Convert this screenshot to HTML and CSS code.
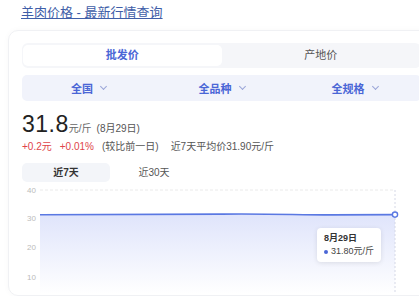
FILE: index.html
```html
<!DOCTYPE html>
<html lang="zh">
<head>
  <meta charset="UTF-8" />
  <title>羊肉价格 - 最新行情查询</title>
  <link rel="stylesheet" href="styles.css">
</head>
<body>

  <a class="page-title" href="#">羊肉价格 - 最新行情查询</a>

  <div class="card">

    <!-- onglets prix -->
    <div class="price-tabs">
      <div class="price-tab active">批发价</div>
      <div class="price-tab">产地价</div>
    </div>

    <!-- filtres -->
    <div class="filters">
      <div class="filter">全国 <span class="chev"></span></div>
      <div class="filter">全品种 <span class="chev"></span></div>
      <div class="filter">全规格 <span class="chev"></span></div>
    </div>

    <!-- prix -->
    <div class="price">
      <span class="price-value">31.8</span><span class="price-unit">元/斤</span>
      <span class="price-date">(8月29日)</span>
    </div>
    <div class="price-change">
      <span class="up">+0.2元</span>
      <span class="up">+0.01%</span>
      <span class="muted">(较比前一日)</span>
      <span class="muted avg">近7天平均价31.90元/斤</span>
    </div>

    <!-- periode -->
    <div class="periods">
      <div class="period active">近7天</div>
      <div class="period">近30天</div>
    </div>

    <!-- graphique -->
    <div class="chart">
      <svg width="396" height="110" viewBox="0 0 396 110">
        <defs>
          <linearGradient id="fill" x1="0" y1="0" x2="0" y2="1">
            <stop offset="0" stop-color="#dfe4fb" />
            <stop offset="1" stop-color="#ffffff" />
          </linearGradient>
        </defs>
        <g class="axis">
          <text x="14" y="9">40</text>
          <text x="14" y="37">30</text>
          <text x="14" y="66">20</text>
          <text x="14" y="96">10</text>
        </g>
        <g class="grid">
          <line x1="18" y1="6" x2="373" y2="6" />
          <line x1="18" y1="34.5" x2="373" y2="34.5" />
          <line x1="18" y1="63.5" x2="373" y2="63.5" />
          <line x1="18" y1="92.5" x2="373" y2="92.5" />
        </g>
        <path d="M18 30.8 C 80 30.6, 140 30.5, 200 30.1 S 270 30.9, 310 30.9 L 373 30.6 L 373 110 L 18 110 Z" fill="url(#fill)" />
        <line class="pointer" x1="373" y1="6" x2="373" y2="110" />
        <path class="series" d="M18 30.8 C 80 30.6, 140 30.5, 200 30.1 S 270 30.9, 310 30.9 L 373 30.6" />
        <circle class="dot" cx="373" cy="30.6" r="2.6" />
      </svg>

      <div class="tooltip">
        <div class="tip-date">8月29日</div>
        <div class="tip-value"><span class="tip-dot"></span>31.80元/斤</div>
      </div>
    </div>

  </div>

</body>
</html>
```

FILE: styles.css
```css
  * {
    margin: 0;
    padding: 0;
    box-sizing: border-box;
  }

  html {
    overflow: hidden;
  }

  body {
    font-family: "Liberation Sans", "Noto Sans CJK SC", sans-serif;
    background: #fff;
    color: #333;
    width: 419px;
    height: 296px;
    overflow: hidden;
  }

  /* TITRE */
  .page-title {
    display: block;
    margin: 4px 0 0 21px;
    font-size: 13px;
    line-height: 18px;
    color: #3f5ea8;
    text-decoration: underline;
  }

  /* CARTE */
  .card {
    width: 432px;
    margin: 8px 0 0 8px;
    padding: 12px 18px 0 13px;
    border: 1px solid #f0f1f4;
    border-radius: 10px;
    box-shadow: 0 0 6px rgba(0, 0, 0, 0.03);
    height: 266px;
    overflow: hidden;
  }

  /* ONGLETS PRIX */
  .price-tabs {
    display: flex;
    background: #f5f6f9;
    border-radius: 6px;
    padding: 2px 1px;
    height: 25px;
  }
  .price-tab {
    flex: 1;
    text-align: center;
    font-size: 11px;
    line-height: 21px;
    color: #555;
  }
  .price-tab.active {
    background: #fff;
    border-radius: 5px;
    color: #4a66d6;
    font-weight: bold;
  }

  /* FILTRES */
  .filters {
    display: flex;
    margin-top: 7px;
    height: 26px;
    background: #f1f3fb;
    border-radius: 5px;
  }
  .filter {
    flex: 1;
    display: flex;
    justify-content: center;
    align-items: center;
    gap: 8px;
    font-size: 11px;
    font-weight: bold;
    color: #4a66d6;
  }
  .chev {
    width: 5px;
    height: 5px;
    border-right: 1px solid #9aa6d8;
    border-bottom: 1px solid #9aa6d8;
    transform: rotate(45deg);
    margin-top: -3px;
  }

  /* PRIX */
  .price {
    margin-top: 10px;
    display: flex;
    align-items: baseline;
    height: 26px;
  }
  .price-value {
    font-size: 23px;
    color: #222;
    letter-spacing: 0.5px;
  }
  .price-unit {
    font-size: 10px;
    color: #666;
  }
  .price-date {
    font-size: 10px;
    color: #555;
    margin-left: 5px;
  }
  .price-change {
    margin-top: 3px;
    font-size: 10px;
    line-height: 14px;
    display: flex;
    gap: 8px;
  }
  .up {
    color: #e0444a;
  }
  .muted {
    color: #555;
  }
  .avg {
    margin-left: 4px;
  }

  /* PERIODE */
  .periods {
    margin-top: 9px;
    display: flex;
    height: 19px;
  }
  .period {
    width: 88px;
    text-align: center;
    font-size: 10px;
    line-height: 19px;
    color: #555;
  }
  .period.active {
    background: #f3f5f9;
    border-radius: 5px;
    font-weight: bold;
    color: #333;
  }

  /* GRAPHIQUE */
  .chart {
    position: relative;
    margin-top: 2px;
  }
  .chart svg {
    display: block;
  }
  .axis text {
    font-size: 8px;
    fill: #bbb;
    text-anchor: end;
  }
  .grid line {
    stroke: #eaeaea;
    stroke-width: 1;
    stroke-dasharray: 3 2;
  }
  .pointer {
    stroke: #d5d8e6;
    stroke-width: 1;
    stroke-dasharray: 2 2;
  }
  .series {
    fill: none;
    stroke: #5a78e2;
    stroke-width: 1.6;
  }
  .dot {
    fill: #fff;
    stroke: #5a78e2;
    stroke-width: 1.4;
  }

  /* INFOBULLE */
  .tooltip {
    position: absolute;
    left: 295px;
    top: 44px;
    padding: 4px 7px;
    background: #fff;
    border-radius: 4px;
    box-shadow: 0 1px 5px rgba(0, 0, 0, 0.1);
    font-size: 9px;
    line-height: 13px;
    color: #444;
    white-space: nowrap;
  }
  .tip-date {
    font-weight: bold;
    color: #333;
  }
  .tip-value {
    display: flex;
    align-items: center;
    gap: 3px;
  }
  .tip-dot {
    width: 4px;
    height: 4px;
    border-radius: 50%;
    background: #4a66d6;
  }
```
